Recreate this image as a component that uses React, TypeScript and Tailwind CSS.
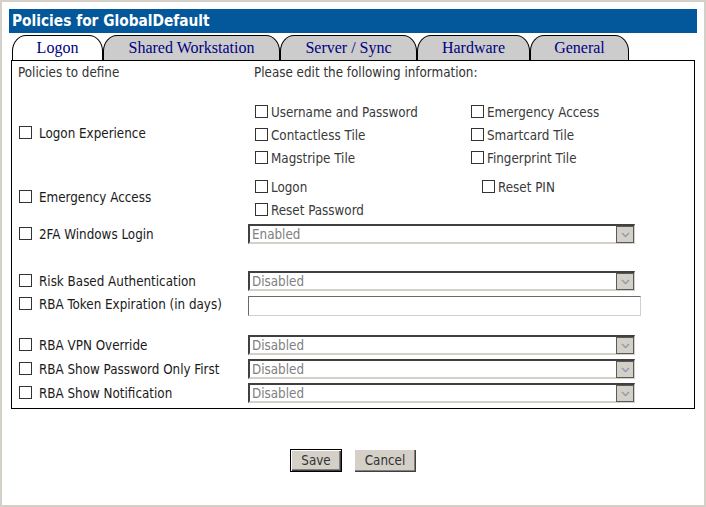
import React from "react"

const Check = () => (
  <span className="inline-block w-[13px] h-[13px] border border-[#333] bg-white shrink-0" />
)

const Chevron = () => (
  <svg width="9" height="6" viewBox="0 0 9 6">
    <path d="M1 1 L4.5 4.5 L8 1" fill="none" stroke="#8a9ab0" strokeWidth="1.4" />
  </svg>
)

function Select({ value }: { value: string }) {
  return (
    <div className="w-[387px] h-[20px] flex items-center bg-white border-t-2 border-l-2 border-b-2 border-r border-t-[#404040] border-l-[#404040] border-b-[#d4d0c8] border-r-[#d4d0c8] pl-[2px] text-[#808080]">
      <span className="flex-1 leading-none pt-[2px]">{value}</span>
      <span className="w-[18px] h-[17px] -mb-[1px] bg-[#d4d0c8] border border-[#5a5a5a] flex items-center justify-center">
        <Chevron />
      </span>
    </div>
  )
}

function Label({ text }: { text: string }) {
  return (
    <div className="w-[236px] pl-[7px] flex items-center gap-[7px] text-[#1a1a1a]">
      <Check />
      <span className="leading-none pt-[2px]">{text}</span>
    </div>
  )
}

function Opt({ text }: { text: string }) {
  return (
    <div className="flex items-center gap-[3px] h-[23px] text-[#3a3a3a]">
      <Check />
      <span className="leading-none pt-[2px]">{text}</span>
    </div>
  )
}

const tabs = [
  { name: "Logon", w: "w-[91px]", active: true },
  { name: "Shared Workstation", w: "w-[177px]", active: false },
  { name: "Server / Sync", w: "w-[137px]", active: false },
  { name: "Hardware", w: "w-[113px]", active: false },
  { name: "General", w: "w-[99px]", active: false },
]

export default function App() {
  return (
    <div className="w-[706px] h-[507px] border-2 border-[#d4d0c8] bg-white p-[7px] font-['DejaVu_Sans_Condensed','DejaVu_Sans',sans-serif] text-[13.3px]">
      <div className="h-[24px] bg-[#02589b] text-white font-bold text-[15.3px] pl-[3px] flex items-center">
        Policies for GlobalDefault
      </div>

      <div className="mt-[2px] mx-[2px] pl-[1px] flex h-[25px]">
        {tabs.map((t) => (
          <div
            key={t.name}
            className={`${t.w} h-[25px] flex items-center justify-center border border-b-0 border-black rounded-t-[14px_16px] font-['Liberation_Serif',serif] text-[16px] text-[#000080] ${
              t.active ? "bg-white" : "bg-[#cccccc]"
            }`}
          >
            {t.name}
          </div>
        ))}
      </div>

      <div className="mx-[2px] border border-black pb-[5px]">
        <div className="h-[22px] flex items-center text-[#333] pt-[2px]">
          <div className="w-[236px] pl-[6px]">Policies to define</div>
          <div className="pl-[6px]">Please edit the following information:</div>
        </div>

        <div className="mt-[17px] flex items-center">
          <div className="pb-[3px]">
            <Label text="Logon Experience" />
          </div>
          <div className="pl-[7px] flex">
            <div className="w-[216px]">
              <Opt text="Username and Password" />
              <Opt text="Contactless Tile" />
              <Opt text="Magstripe Tile" />
            </div>
            <div>
              <Opt text="Emergency Access" />
              <Opt text="Smartcard Tile" />
              <Opt text="Fingerprint Tile" />
            </div>
          </div>
        </div>

        <div className="mt-[6px] flex items-center">
          <div className="pb-[3px]">
            <Label text="Emergency Access" />
          </div>
          <div className="pl-[7px] flex">
            <div className="w-[227px]">
              <Opt text="Logon" />
              <Opt text="Reset Password" />
            </div>
            <div>
              <Opt text="Reset PIN" />
            </div>
          </div>
        </div>

        <div className="mt-[3px] h-[20px] flex items-center">
          <Label text="2FA Windows Login" />
          <Select value="Enabled" />
        </div>

        <div className="mt-[27px] h-[20px] flex items-center">
          <Label text="Risk Based Authentication" />
          <Select value="Disabled" />
        </div>

        <div className="mt-[5px] h-[20px] flex items-center">
          <div className="pb-[4px]">
            <Label text="RBA Token Expiration (in days)" />
          </div>
          <div className="w-[393px] h-[20px] bg-white border border-t-[#6a6a6a] border-l-[#6a6a6a] border-b-[#d4d0c8] border-r-[#d4d0c8]" />
        </div>

        <div className="mt-[19px] h-[20px] flex items-center">
          <Label text="RBA VPN Override" />
          <Select value="Disabled" />
        </div>

        <div className="mt-[4px] h-[20px] flex items-center">
          <Label text="RBA Show Password Only First" />
          <Select value="Disabled" />
        </div>

        <div className="mt-[4px] h-[20px] flex items-center">
          <Label text="RBA Show Notification" />
          <Select value="Disabled" />
        </div>
      </div>

      <div className="mt-[40px] flex justify-center gap-[12px]">
        <button className="w-[52px] h-[23px] bg-[#d4d0c8] border border-black shadow-[inset_1px_1px_#fff,inset_-1px_-1px_#404040,inset_-2px_-2px_#808080] text-[#333] leading-none">
          Save
        </button>
        <button className="w-[62px] h-[23px] bg-[#d4d0c8] shadow-[inset_1px_1px_#fff,inset_-1px_-1px_#404040,inset_-2px_-2px_#808080] text-[#333] leading-none">
          Cancel
        </button>
      </div>
    </div>
  )
}
